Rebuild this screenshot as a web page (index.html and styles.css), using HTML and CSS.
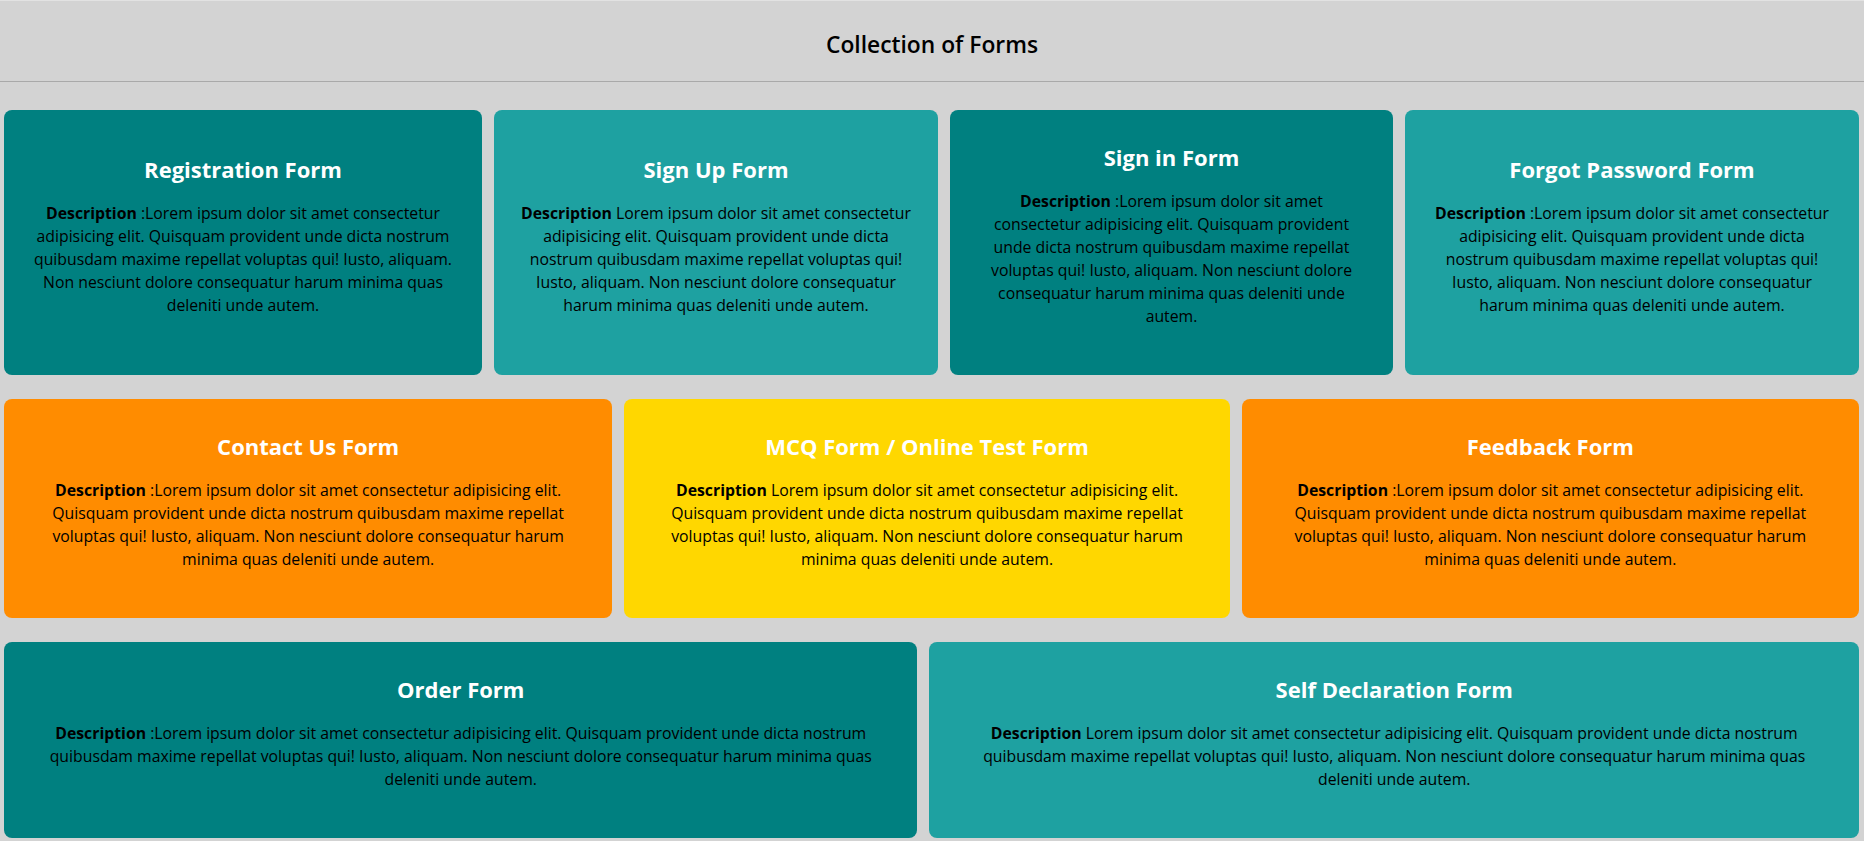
FILE: index.html
```html
<!DOCTYPE html>
<html lang="en">
<head>
<meta charset="utf-8">
<title>Collection of Forms</title>
<link rel="stylesheet" href="styles.css">
</head>
<body>
<header class="page-header">
  <h1 class="page-title">Collection of Forms</h1>
</header>
<main class="forms">
  <section class="row row-4">
    <div class="card teal">
      <h2 class="card-title">Registration Form</h2>
      <p class="card-text"><b>Description</b> :Lorem ipsum dolor sit amet consectetur adipisicing elit. Quisquam provident unde dicta nostrum quibusdam maxime repellat voluptas qui! Iusto, aliquam. Non nesciunt dolore consequatur harum minima quas deleniti unde autem.</p>
    </div>
    <div class="card sea">
      <h2 class="card-title">Sign Up Form</h2>
      <p class="card-text"><b>Description</b> Lorem ipsum dolor sit amet consectetur adipisicing elit. Quisquam provident unde dicta nostrum quibusdam maxime repellat voluptas qui! Iusto, aliquam. Non nesciunt dolore consequatur harum minima quas deleniti unde autem.</p>
    </div>
    <div class="card teal">
      <h2 class="card-title">Sign in Form</h2>
      <p class="card-text"><b>Description</b> :Lorem ipsum dolor sit amet consectetur adipisicing elit. Quisquam provident unde dicta nostrum quibusdam maxime repellat voluptas qui! Iusto, aliquam. Non nesciunt dolore consequatur harum minima quas deleniti unde autem.</p>
    </div>
    <div class="card sea">
      <h2 class="card-title">Forgot Password Form</h2>
      <p class="card-text"><b>Description</b> :Lorem ipsum dolor sit amet consectetur adipisicing elit. Quisquam provident unde dicta nostrum quibusdam maxime repellat voluptas qui! Iusto, aliquam. Non nesciunt dolore consequatur harum minima quas deleniti unde autem.</p>
    </div>
  </section>
  <section class="row row-3">
    <div class="card orange">
      <h2 class="card-title">Contact Us Form</h2>
      <p class="card-text"><b>Description</b> :Lorem ipsum dolor sit amet consectetur adipisicing elit. Quisquam provident unde dicta nostrum quibusdam maxime repellat voluptas qui! Iusto, aliquam. Non nesciunt dolore consequatur harum minima quas deleniti unde autem.</p>
    </div>
    <div class="card gold">
      <h2 class="card-title">MCQ Form / Online Test Form</h2>
      <p class="card-text"><b>Description</b> Lorem ipsum dolor sit amet consectetur adipisicing elit. Quisquam provident unde dicta nostrum quibusdam maxime repellat voluptas qui! Iusto, aliquam. Non nesciunt dolore consequatur harum minima quas deleniti unde autem.</p>
    </div>
    <div class="card orange">
      <h2 class="card-title">Feedback Form</h2>
      <p class="card-text"><b>Description</b> :Lorem ipsum dolor sit amet consectetur adipisicing elit. Quisquam provident unde dicta nostrum quibusdam maxime repellat voluptas qui! Iusto, aliquam. Non nesciunt dolore consequatur harum minima quas deleniti unde autem.</p>
    </div>
  </section>
  <section class="row row-2">
    <div class="card teal">
      <h2 class="card-title">Order Form</h2>
      <p class="card-text"><b>Description</b> :Lorem ipsum dolor sit amet consectetur adipisicing elit. Quisquam provident unde dicta nostrum quibusdam maxime repellat voluptas qui! Iusto, aliquam. Non nesciunt dolore consequatur harum minima quas deleniti unde autem.</p>
    </div>
    <div class="card sea">
      <h2 class="card-title">Self Declaration Form</h2>
      <p class="card-text"><b>Description</b> Lorem ipsum dolor sit amet consectetur adipisicing elit. Quisquam provident unde dicta nostrum quibusdam maxime repellat voluptas qui! Iusto, aliquam. Non nesciunt dolore consequatur harum minima quas deleniti unde autem.</p>
    </div>
  </section>
</main>
</body>
</html>
```

FILE: styles.css
```css
* {
  box-sizing: border-box;
}

html, body {
  margin: 0;
  padding: 0;
  background: #d3d3d3;
  font-family: "Open Sans", "Noto Sans", sans-serif;
  color: #000;
}

.page-header {
  height: 82px;
  padding-top: 8px;
  border-top: 1px solid #e2e2e2;
  border-bottom: 1px solid #a9a9a9;
  display: flex;
  align-items: center;
  justify-content: center;
}

.page-title {
  margin: 0;
  font-size: 22.8px;
  font-weight: 600;
  line-height: 1;
}

.forms {
  padding: 28px 5px 0 4px;
  display: flex;
  flex-direction: column;
  gap: 24px;
}

.row {
  display: grid;
  gap: 12px;
}

.row-4 {
  grid-template-columns: 478fr 444fr 443fr 454fr;
}

.row-3 {
  grid-template-columns: 608fr 605fr 617fr;
}

.row-2 {
  grid-template-columns: 913fr 929fr;
}

.card {
  border-radius: 8px;
  padding: 31px 26px 16px;
  display: flex;
  flex-direction: column;
  justify-content: center;
  text-align: center;
}

.teal { background: #008080; }
.sea { background: #1ea1a1; }
.orange { background: #ff8c00; }
.gold { background: #ffd700; }

.card-title {
  margin: 0 0 17px;
  color: #fff;
  font-size: 22px;
  font-weight: 700;
  line-height: 32px;
}

.card-text {
  margin: 0 0 31px;
  font-size: 15.8px;
  line-height: 23px;
}

.card-text b {
  font-weight: 700;
}
```
